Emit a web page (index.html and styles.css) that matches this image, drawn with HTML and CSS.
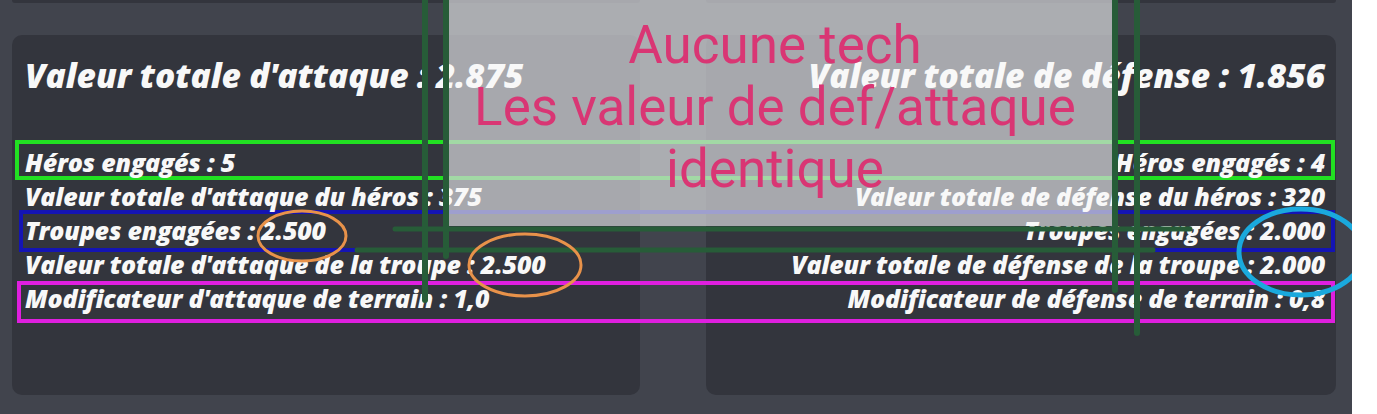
FILE: index.html
```html
<!DOCTYPE html>
<html lang="fr">
<head>
<meta charset="utf-8">
<title>Comparaison attaque / défense</title>
<link rel="stylesheet" href="styles.css">
</head>
<body>
<div class="screen">
  <div class="stage">
    <div class="stubs"><div class="stub stub-left"></div><div class="stub stub-right"></div></div>
    <div class="cards">
      <section class="card card-left">
        <h2 class="total">Valeur totale d'attaque : 2.875</h2>
        <ul class="rows">
          <li>Héros engagés : 5</li>
          <li>Valeur totale d'attaque du héros : 375</li>
          <li>Troupes engagées : 2.500</li>
          <li>Valeur totale d'attaque de la troupe : 2.500</li>
          <li>Modificateur d'attaque de terrain : 1,0</li>
        </ul>
      </section>
      <section class="card card-right">
        <h2 class="total">Valeur totale de défense : 1.856</h2>
        <ul class="rows">
          <li>Héros engagés : 4</li>
          <li>Valeur totale de défense du héros : 320</li>
          <li>Troupes engagées : 2.000</li>
          <li>Valeur totale de défense de la troupe : 2.000</li>
          <li>Modificateur de défense de terrain : 0,8</li>
        </ul>
      </section>
    </div>

    <svg class="marks marks-under" viewBox="0 0 1352 414" width="1352" height="414" aria-hidden="true">
      <rect x="17" y="142" width="1316" height="36" fill="none" stroke="#22e022" stroke-width="4"/>
      <rect x="21" y="212" width="1312" height="38" fill="none" stroke="#1414b4" stroke-width="4"/>
      <rect x="19" y="283" width="1314" height="38" fill="none" stroke="#df1fdf" stroke-width="4"/>
    </svg>

    <div class="veil"></div>
    <div class="note">Aucune tech<br>Les valeur de def/attaque<br>identique</div>

    <svg class="marks marks-over" viewBox="0 0 1352 414" width="1352" height="414" aria-hidden="true">
      <g stroke="#275c38" stroke-linecap="round" fill="none">
        <line x1="425" y1="0" x2="425" y2="300" stroke-width="6"/>
        <line x1="446" y1="0" x2="446" y2="256" stroke-width="6"/>
        <line x1="1115" y1="0" x2="1115" y2="290" stroke-width="6"/>
        <line x1="1137" y1="0" x2="1137" y2="333" stroke-width="6"/>
        <line x1="395" y1="229" x2="1190" y2="229" stroke-width="5"/>
        <line x1="357" y1="250" x2="1153" y2="250" stroke-width="5"/>
      </g>
      <ellipse cx="302" cy="236" rx="44" ry="25" fill="none" stroke="#e8924a" stroke-width="3"/>
      <ellipse cx="525" cy="265" rx="56" ry="31" fill="none" stroke="#e8924a" stroke-width="3"/>
      <ellipse cx="1301" cy="252" rx="62" ry="43" fill="none" stroke="#1aa9dd" stroke-width="5"/>
    </svg>
  </div>
  <div class="edge"></div>
</div>
</body>
</html>
```

FILE: styles.css
```css
html, body {
  margin: 0;
  padding: 0;
}

body {
  width: 1377px;
  height: 414px;
  overflow: hidden;
  background: #ffffff;
  font-family: "Open Sans", "Noto Sans", sans-serif;
}

.screen {
  display: flex;
  height: 414px;
}

.stage {
  position: relative;
  width: 1352px;
  height: 414px;
  background: #41444d;
  overflow: hidden;
}

.edge {
  flex: 1;
  background: #ffffff;
}

.stubs {
  display: flex;
  gap: 66px;
  padding-left: 12px;
  height: 3px;
}

.stub {
  background: #33353d;
  border-radius: 0 0 8px 8px;
}

.stub-left { width: 628px; }
.stub-right { width: 630px; }

.cards {
  display: flex;
  gap: 66px;
  padding: 32px 0 0 12px;
}

.card {
  height: 360px;
  box-sizing: border-box;
  background: #33353d;
  border-radius: 10px;
  padding: 20px 14px 0 13px;
  color: #f8f8f8;
  font-weight: 800;
  font-style: italic;
}

.card-left { width: 628px; }

.card-right {
  width: 630px;
  text-align: right;
  padding-right: 11px;
}

.total {
  position: relative;
  z-index: 3;
  margin: 0 0 50px 0;
  font-size: 33.5px;
  line-height: 40px;
  font-weight: 800;
  letter-spacing: -0.1px;
  white-space: nowrap;
}

.rows {
  position: relative;
  z-index: 3;
  list-style: none;
  margin: 0;
  padding: 0;
  font-size: 25px;
  line-height: 34px;
  letter-spacing: -0.2px;
  white-space: nowrap;
}

.marks {
  position: absolute;
  left: 0;
  top: 0;
  pointer-events: none;
}

.marks-under { z-index: 1; }
.marks-over { z-index: 4; }

.veil {
  position: absolute;
  left: 449px;
  top: 0;
  width: 664px;
  height: 226px;
  background: rgba(212, 213, 216, 0.72);
  z-index: 2;
}

.note {
  position: absolute;
  left: 449px;
  top: 14px;
  width: 652px;
  z-index: 5;
  text-align: center;
  font-family: Roboto, "Noto Sans", sans-serif;
  font-size: 53px;
  line-height: 62px;
  font-weight: 400;
  color: #d93674;
}
```
